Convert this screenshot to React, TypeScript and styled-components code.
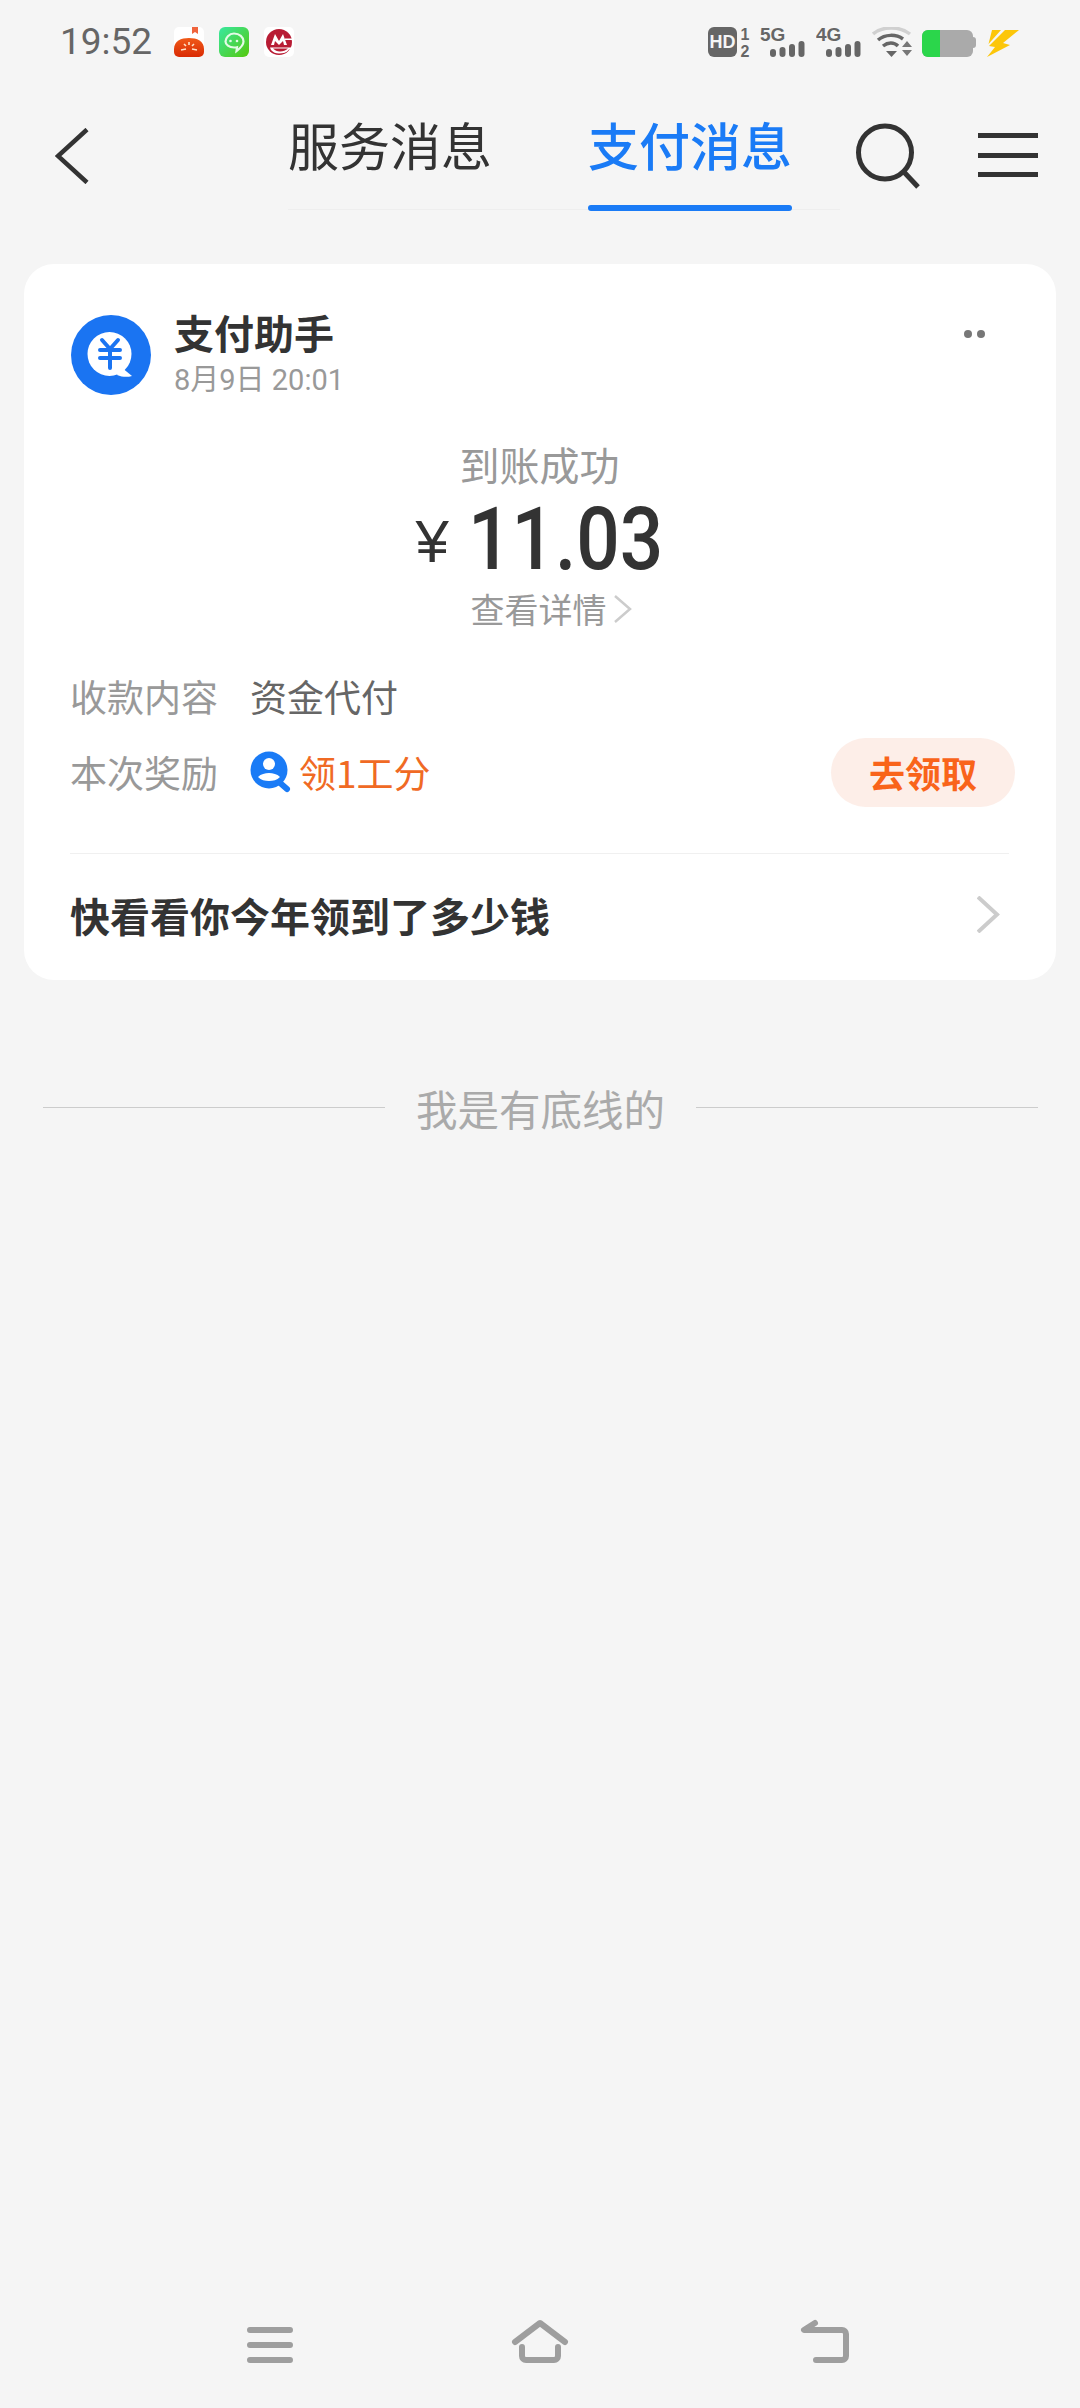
import React from "react";
import styled, { createGlobalStyle } from "styled-components";

const GlobalStyle = createGlobalStyle`
  html, body {
    margin: 0;
    padding: 0;
    background: #f5f5f5;
  }
  * {
    box-sizing: border-box;
  }
`;

const CJK = `"Noto Sans CJK SC", "Noto Sans", sans-serif`;

const Page = styled.div`
  width: 1080px;
  height: 2408px;
  background: #f5f5f5;
  display: flex;
  flex-direction: column;
  font-family: ${CJK};
  overflow: hidden;
`;

const StatusBar = styled.div`
  height: 84px;
  padding: 27px 60px 0 60px;
  display: flex;
  justify-content: space-between;
  align-items: flex-start;
`;

const StatusGroup = styled.div`
  display: flex;
  align-items: flex-start;
`;

const Time = styled.span`
  font-family: Roboto, sans-serif;
  font-size: 37px;
  line-height: 30px;
  color: #666;
  width: 114px;
`;

const AppIcons = styled.div`
  display: flex;
  gap: 15px;
`;

const StatusIcons = styled.div`
  display: flex;
  align-items: flex-start;
  gap: 10px;
`;

const TallSvg = styled.svg`
  margin-top: -6px;
  display: block;
`;

const Header = styled.div`
  position: relative;
  height: 126px;
  display: flex;
  align-items: flex-start;
`;

const BackBtn = styled.div`
  width: 288px;
  padding: 44px 0 0 55px;
  line-height: 0;
`;

const Tabs = styled.div`
  width: 552px;
  height: 126px;
  display: flex;
  gap: 96px;
  border-bottom: 1px solid #eee;
`;

const Tab = styled.div<{ $active?: boolean }>`
  position: relative;
  width: 204px;
  height: 126px;
  padding-top: 26px;
  text-align: center;
  font-size: 51px;
  line-height: 68px;
  color: ${(p) => (p.$active ? "#1a7bf6" : "#333")};
  font-weight: ${(p) => (p.$active ? 500 : 400)};
  &::after {
    content: "";
    display: ${(p) => (p.$active ? "block" : "none")};
    position: absolute;
    left: 0;
    right: 0;
    bottom: -1px;
    height: 6px;
    border-radius: 3px;
    background: #1a7bf6;
  }
`;

const HeaderActions = styled.div`
  margin-left: 16px;
  display: flex;
  gap: 56px;
  padding-top: 39px;
  line-height: 0;
`;

const MenuLines = styled.div`
  width: 60px;
  height: 44px;
  margin-top: 10px;
  display: flex;
  flex-direction: column;
  justify-content: space-between;
  span {
    display: block;
    height: 5px;
    background: #333;
  }
`;

const Card = styled.div`
  margin: 54px 24px 0 24px;
  height: 716px;
  background: #fff;
  border-radius: 30px;
  padding: 51px 47px 0 46px;
  display: flex;
  flex-direction: column;
`;

const CardHead = styled.div`
  display: flex;
  align-items: flex-start;
  gap: 23px;
  padding-left: 1px;
`;

const HeadText = styled.div`
  flex: 1;
  margin-top: -3px;
`;

const CardTitle = styled.div`
  font-size: 40px;
  line-height: 40px;
  font-weight: 700;
  color: #333;
`;

const CardDate = styled.div`
  font-size: 29px;
  line-height: 32px;
  margin-top: 12px;
  color: #999;
  font-family: Roboto, ${CJK};
`;

const MoreDots = styled.div`
  display: flex;
  gap: 5px;
  padding: 15px 24px 0 0;
  span {
    width: 8px;
    height: 8px;
    border-radius: 50%;
    background: #777;
  }
`;

const Center = styled.div`
  margin-top: 41px;
  display: flex;
  flex-direction: column;
  align-items: center;
`;

const Success = styled.div`
  font-size: 40px;
  line-height: 54px;
  color: #999;
`;

const Amount = styled.div`
  display: flex;
  align-items: center;
  height: 80px;
  margin-top: 8px;
`;

const Yen = styled.span`
  font-family: "Liberation Sans", sans-serif;
  font-size: 60px;
  line-height: 68px;
  color: #333;
  margin: 6px 19px 0 0;
`;

/* no condensed face is installed, so Roboto is narrowed to the reference's digit width */
const Digits = styled.span`
  display: inline-block;
  font-family: Roboto, sans-serif;
  font-weight: 500;
  font-size: 88px;
  line-height: 80px;
  color: #333;
  transform: scaleX(0.87);
  transform-origin: left center;
  margin-right: -29px;
`;

const Details = styled.div`
  display: flex;
  align-items: center;
  gap: 7px;
  margin: 7px 0 0 24px;
  font-size: 34px;
  line-height: 46px;
  color: #999;
`;

const InfoRows = styled.div`
  margin-top: 39px;
  display: flex;
  flex-direction: column;
  gap: 26px;
`;

const InfoRow = styled.div`
  height: 50px;
  display: flex;
  align-items: center;
  font-size: 37px;
`;

const InfoLabel = styled.span`
  width: 180px;
  color: #999;
`;

const InfoValue = styled.span`
  color: #666;
`;

const Reward = styled.span`
  flex: 1;
  display: flex;
  align-items: center;
  gap: 8px;
  color: #f06a24;
`;

const ClaimBtn = styled.div`
  width: 184px;
  height: 69px;
  margin-right: -6px;
  border-radius: 35px;
  background: #fdeee8;
  color: #f9641a;
  font-size: 36px;
  font-weight: 700;
  display: flex;
  align-items: center;
  justify-content: center;
`;

const PromoRow = styled.div`
  margin-top: 56px;
  flex: 1;
  border-top: 1px solid #f0f0f0;
  display: flex;
  align-items: center;
  justify-content: space-between;
  padding: 0 9px 5px 0;
  font-size: 40px;
  font-weight: 700;
  color: #333;
`;

const EndMark = styled.div`
  margin: 100px 42px 0 43px;
  display: flex;
  align-items: center;
  gap: 31px;
  font-size: 41.5px;
  line-height: 56px;
  color: #aaa;
  &::before,
  &::after {
    content: "";
    flex: 1;
    height: 1px;
    margin-top: -2px;
    background: #ccc;
  }
`;

const NavBar = styled.div`
  margin-top: auto;
  height: 90px;
  padding-left: 246px;
  display: grid;
  grid-template-columns: 264px 290px auto;
  align-items: start;
  line-height: 0;
`;

const TomatoIcon = () => (
  <svg width="30" height="30" viewBox="0 0 30 30">
    <defs>
      <linearGradient id="tomato" x1="0" y1="0" x2="0" y2="1">
        <stop offset="0" stopColor="#f05a18" />
        <stop offset="1" stopColor="#d92a04" />
      </linearGradient>
    </defs>
    <rect width="30" height="30" rx="5" fill="#fff" />
    <path d="M18 0h6v7l-3-2-3 2z" fill="#f0643c" />
    <path d="M0 22C0 14 7 11 15 11s15 3 15 11v3a5 5 0 0 1-5 5H5a5 5 0 0 1-5-5z" fill="url(#tomato)" />
    <path d="M7 23l5-1M23 23l-5-1M10 17l2 2M20 17l-2 2M15 15v3" stroke="#ffe3c8" strokeWidth="1.6" />
  </svg>
);

const ChatIcon = () => (
  <svg width="30" height="30" viewBox="0 0 30 30">
    <defs>
      <linearGradient id="chat" x1="0" y1="0" x2="1" y2="1">
        <stop offset="0" stopColor="#38e8a0" />
        <stop offset="1" stopColor="#55c80c" />
      </linearGradient>
    </defs>
    <rect width="30" height="30" rx="6" fill="url(#chat)" />
    <path d="M15 6.500c5.500 0 9.500 3.500 9.500 8 0 3.500-3 6.500-7 9.500l.5-3.800c-.8.2-2 .3-3 .3-5 0-8.500-2.800-8.500-6s3.500-8 8.500-8z" fill="none" stroke="#e4fbe6" strokeWidth="2.200" />
    <circle cx="11.500" cy="14" r="1.300" fill="#e4fbe6" />
    <circle cx="18" cy="14" r="1.300" fill="#e4fbe6" />
  </svg>
);

const BankIcon = () => (
  <svg width="30" height="30" viewBox="0 0 30 30">
    <rect width="30" height="30" rx="5" fill="#fff" />
    <circle cx="15" cy="15" r="13" fill="#b81c34" />
    <path d="M7 18l4-11 4 7 4-7 4 11h-3l-1-4-4 4-4-4-1 4z" fill="#fff" />
    <path d="M6 20.500h22v2H25c-2 3-6 4-10 4-3 0-6-1-8-3.500z" fill="#fff" />
    <path d="M9 21.500h15c-2 2-5 3-8 3-3 0-5-1-7-3z" fill="#b81c34" />
    <rect x="21" y="11.500" width="9" height="1.500" fill="#fff" />
  </svg>
);

const HdIcon = () => (
  <TallSvg width="42" height="42" viewBox="0 -6 42 42">
    <rect x="0" y="0" width="29" height="30" rx="6" fill="#666" />
    <text x="14.500" y="21" textAnchor="middle" fontFamily="Liberation Sans" fontWeight="700" fontSize="18" fill="#f5f5f5">HD</text>
    <text x="37" y="13" textAnchor="middle" fontFamily="Liberation Sans" fontWeight="700" fontSize="16" fill="#666">1</text>
    <text x="37" y="30" textAnchor="middle" fontFamily="Liberation Sans" fontWeight="700" fontSize="16" fill="#666">2</text>
  </TallSvg>
);

const SignalIcon = ({ label }: { label: string }) => (
  <TallSvg width="46" height="42" viewBox="0 -6 46 42">
    <text x="0" y="14" fontFamily="Liberation Sans" fontWeight="700" fontSize="19" fill="#666">{label}</text>
    <rect x="10" y="22" width="6" height="8" rx="3" fill="#666" />
    <rect x="19.500" y="20" width="6" height="10" rx="3" fill="#666" />
    <rect x="29" y="17" width="6" height="13" rx="3" fill="#666" />
    <rect x="38.500" y="14" width="6" height="16" rx="3" fill="#666" />
  </TallSvg>
);

const WifiIcon = () => (
  <svg width="40" height="30" viewBox="0 0 40 30">
    <path d="M1 7C10-1 28-1 38 7" stroke="#d0d0d0" strokeWidth="3.500" fill="none" />
    <path d="M6 13C13 7 24 7 31 12" stroke="#666" strokeWidth="3.500" fill="none" />
    <path d="M11 19c5-4 11-4 15 0" stroke="#666" strokeWidth="3.500" fill="none" />
    <path d="M14 24h11l-5.500 6z" fill="#666" />
    <path d="M30 20h10l-5-6zM30 23h10l-5 6z" fill="#777" />
  </svg>
);

const BatteryIcon = () => (
  <svg width="55" height="30" viewBox="0 0 55 30">
    <rect x="0" y="3" width="51" height="27" rx="6" fill="#aaa" />
    <path d="M6 3h12v27H6a6 6 0 0 1-6-6V9a6 6 0 0 1 6-6z" fill="#2bd64b" />
    <path d="M51 10a3 3 0 0 1 3 3v5a3 3 0 0 1-3 3z" fill="#aaa" />
  </svg>
);

const BoltIcon = () => (
  <svg width="33" height="30" viewBox="0 0 33 30">
    <path d="M5 3h9L1.500 17zM18 3h14L16 16l7 2L0 30l8-10-6-1z" fill="#fcc60a" />
  </svg>
);

const BackIcon = () => (
  <svg width="34" height="56" viewBox="0 0 34 56">
    <path d="M32 1.500L3 28l29 26.500" fill="none" stroke="#333" strokeWidth="4.500" />
  </svg>
);

const SearchIcon = () => (
  <svg width="66" height="68" viewBox="0 0 66 68">
    <circle cx="29" cy="29.500" r="26.500" fill="none" stroke="#333" strokeWidth="5" />
    <path d="M48 49l14 15" stroke="#333" strokeWidth="5" fill="none" />
  </svg>
);

const YuanBadge = () => (
  <svg width="80" height="80" viewBox="0 0 80 80">
    <circle cx="40" cy="40" r="40" fill="#1a74f2" />
    <circle cx="38.500" cy="39" r="22" fill="#fff" />
    <path d="M50 52l11 9c-5 1.500-10 1-15-1z" fill="#fff" />
    <path d="M31 25l8 9 8-9M29 35h20M29 43h20M39 34v19" fill="none" stroke="#1a74f2" strokeWidth="4" strokeLinecap="round" strokeLinejoin="round" />
  </svg>
);

const RewardIcon = () => (
  <svg width="41" height="42" viewBox="0 0 41 42">
    <path d="M29 31l8 7" stroke="#1a7bf6" strokeWidth="6" strokeLinecap="round" />
    <circle cx="19" cy="19" r="18.500" fill="#1a7bf6" />
    <circle cx="19" cy="13" r="6" fill="#fff" />
    <path d="M8 26c3-3 7-4 11-4s8 1 11 4c-3 3-7 4-11 4s-8-1-11-4z" fill="#fff" />
  </svg>
);

const Chevron = ({ w, h, color, sw }: { w: number; h: number; color: string; sw: number }) => (
  <svg width={w} height={h} viewBox={`0 0 ${w} ${h}`}>
    <path d={`M1 1L${w - 3} ${h / 2}L1 ${h - 1}`} fill="none" stroke={color} strokeWidth={sw} />
  </svg>
);

const NavMenu = () => (
  <svg width="48" height="48" viewBox="0 0 48 48">
    <path d="M4 12h40M4 27h40M4 42h40" stroke="#9e9e9e" strokeWidth="6" strokeLinecap="round" fill="none" />
  </svg>
);

const NavHome = () => (
  <svg width="60" height="48" viewBox="0 0 60 48">
    <path d="M5 24L30 5l25 19" stroke="#9e9e9e" strokeWidth="6" strokeLinecap="round" strokeLinejoin="round" fill="none" />
    <path d="M12 29v9a4 4 0 0 0 4 4h28a4 4 0 0 0 4-4v-9" stroke="#9e9e9e" strokeWidth="6" strokeLinecap="round" fill="none" />
  </svg>
);

const NavBack = () => (
  <svg width="52" height="48" viewBox="0 0 52 48">
    <path d="M15 5L4 12h38a4 4 0 0 1 4 4v22a4 4 0 0 1-4 4H16" stroke="#9e9e9e" strokeWidth="6" strokeLinecap="round" strokeLinejoin="round" fill="none" />
  </svg>
);

const App = () => {
  return (
    <Page>
      <GlobalStyle />
      <StatusBar>
        <StatusGroup>
          <Time>19:52</Time>
          <AppIcons>
            <TomatoIcon />
            <ChatIcon />
            <BankIcon />
          </AppIcons>
        </StatusGroup>
        <StatusIcons>
          <HdIcon />
          <SignalIcon label="5G" />
          <SignalIcon label="4G" />
          <WifiIcon />
          <BatteryIcon />
          <BoltIcon />
        </StatusIcons>
      </StatusBar>
      <Header>
        <BackBtn>
          <BackIcon />
        </BackBtn>
        <Tabs>
          <Tab>服务消息</Tab>
          <Tab $active>支付消息</Tab>
        </Tabs>
        <HeaderActions>
          <SearchIcon />
          <MenuLines>
            <span />
            <span />
            <span />
          </MenuLines>
        </HeaderActions>
      </Header>
      <Card>
        <CardHead>
          <YuanBadge />
          <HeadText>
            <CardTitle>支付助手</CardTitle>
            <CardDate>8月9日 20:01</CardDate>
          </HeadText>
          <MoreDots>
            <span />
            <span />
          </MoreDots>
        </CardHead>
        <Center>
          <Success>到账成功</Success>
          <Amount>
            <Yen>¥</Yen>
            <Digits>11.03</Digits>
          </Amount>
          <Details>
            查看详情
            <Chevron w={19} h={28} color="#ccc" sw={2.5} />
          </Details>
        </Center>
        <InfoRows>
          <InfoRow>
            <InfoLabel>收款内容</InfoLabel>
            <InfoValue>资金代付</InfoValue>
          </InfoRow>
          <InfoRow>
            <InfoLabel>本次奖励</InfoLabel>
            <Reward>
              <RewardIcon />
              领1工分
            </Reward>
            <ClaimBtn>去领取</ClaimBtn>
          </InfoRow>
        </InfoRows>
        <PromoRow>
          快看看你今年领到了多少钱
          <Chevron w={23} h={37} color="#ccc" sw={4} />
        </PromoRow>
      </Card>
      <EndMark>我是有底线的</EndMark>
      <NavBar>
        <NavMenu />
        <NavHome />
        <NavBack />
      </NavBar>
    </Page>
  );
};

export default App;
